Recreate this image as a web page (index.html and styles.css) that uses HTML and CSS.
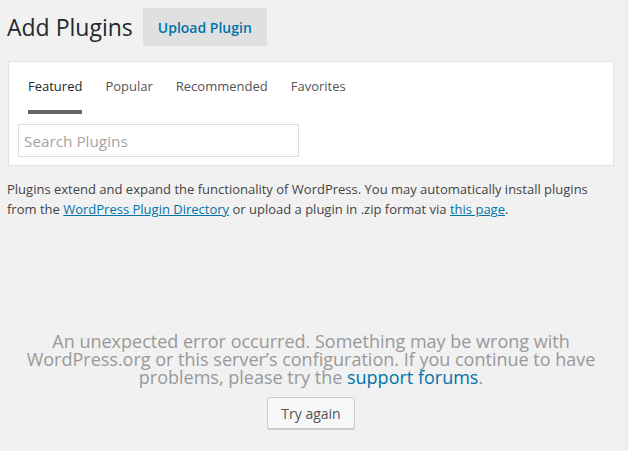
FILE: index.html
```html
<!DOCTYPE html>
<html>
<head>
<meta charset="utf-8">
<link rel="stylesheet" href="styles.css">
</head>
<body>
<div class="wrap">
  <div class="head">
    <h1 class="title">Add Plugins</h1>
    <a class="upload-btn">Upload Plugin</a>
  </div>
  <div class="filter-card">
    <ul class="tabs">
      <li class="tab current">Featured</li>
      <li class="tab">Popular</li>
      <li class="tab">Recommended</li>
      <li class="tab">Favorites</li>
    </ul>
    <div class="search-row">
      <input class="search" type="search" placeholder="Search Plugins">
    </div>
  </div>
  <p class="intro">Plugins extend and expand the functionality of WordPress. You may automatically install plugins from the <a class="link">WordPress Plugin Directory</a> or upload a plugin in .zip format via <a class="link">this page</a>.</p>
  <div class="error">
    <p class="error-text">An unexpected error occurred. Something may be wrong with WordPress.org or this server’s configuration. If you continue to have problems, please try the <a class="error-link">support forums</a>.</p>
    <button class="retry">Try again</button>
  </div>
</div>
</body>
</html>
```
FILE: styles.css
```css
html, body {
  margin: 0;
  padding: 0;
  background: #f1f1f1;
  font-family: "Open Sans", "Liberation Sans", sans-serif;
  color: #444;
  width: 628px;
  height: 451px;
  overflow: hidden;
}
.wrap {
  padding: 8px 13px 0 8px;
  border-right: 1px solid #e6e6e6;
  width: 606px;
  height: 443px;
}
.head {
  display: flex;
  align-items: center;
  gap: 10px;
  height: 38px;
}
.title {
  margin: 0 0 0 -1px;
  font-size: 23px;
  font-weight: 400;
  color: #23282d;
  line-height: 38px;
}
.upload-btn {
  display: flex;
  align-items: center;
  justify-content: center;
  width: 124px;
  height: 38px;
  background: #e0e0e0;
  color: #0073aa;
  font-size: 14px;
  font-weight: 600;
}
.filter-card {
  margin-top: 15px;
  background: #fff;
  border: 1px solid #e2e2e2;
  height: 103px;
}
.tabs {
  list-style: none;
  margin: 0;
  padding: 0 0 0 19px;
  display: flex;
  gap: 23px;
}
.tab {
  font-size: 13px;
  color: #555;
  padding-top: 15px;
  box-sizing: border-box;
  height: 52px;
  line-height: 18px;
}
.tab.current {
  color: #23282d;
  border-bottom: 4px solid #666;
}
.search-row {
  padding: 10px 0 0 9px;
}
.search {
  box-sizing: border-box;
  width: 281px;
  height: 33px;
  border: 1px solid #ddd;
  padding: 0 5px;
  font-family: "Open Sans", sans-serif;
  font-size: 15.3px;
  outline: none;
}
.search::placeholder {
  color: #a3a3a3;
}
.intro {
  margin: 13px 0 0 -1px;
  font-size: 13px;
  line-height: 20px;
  color: #444;
}
.link {
  color: #0073aa;
  text-decoration: underline;
}
.error {
  margin-top: 113px;
  text-align: center;
}
.error-text {
  margin: 0;
  font-size: 18px;
  line-height: 18px;
  color: #999;
}
.error-link {
  color: #0073aa;
}
.retry {
  margin-top: 11px;
  width: 88px;
  height: 32px;
  background: #f7f7f7;
  border: 1px solid #ccc;
  border-radius: 3px;
  box-shadow: 0 1px 0 #ccc;
  font-family: "Open Sans", sans-serif;
  font-size: 14px;
  color: #555;
}
```
